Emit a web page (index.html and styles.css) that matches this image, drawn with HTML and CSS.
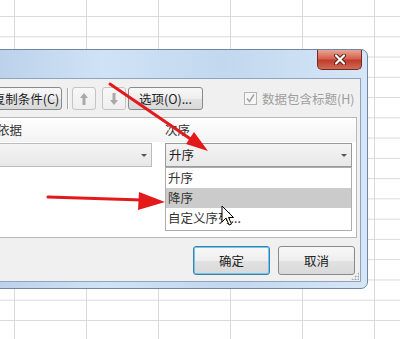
FILE: index.html
```html
<!DOCTYPE html>
<html lang="zh-CN">
<head>
    <meta charset="UTF-8">
    <meta name="viewport" content="width=device-width, initial-scale=1.0">
    <title>排序</title>
    <link rel="stylesheet" href="styles.css">
</head>
<body>

<div class="sheet">

    <div class="dialog">
        <div class="titlebar">
            <span class="title">排序</span>
            <button class="close-btn">
                <svg width="12" height="11" viewBox="0 0 12 11">
                    <path d="M2 1.5 L10 9.5 M10 1.5 L2 9.5" stroke="#5a1e18" stroke-width="4" stroke-linecap="round"/>
                    <path d="M2 1.5 L10 9.5 M10 1.5 L2 9.5" stroke="#ffffff" stroke-width="2.2" stroke-linecap="round"/>
                </svg>
            </button>
        </div>

        <div class="client">
            <div class="toolbar">
                <button class="btn btn-copy">复制条件(C)</button>
                <span class="separator"></span>
                <button class="btn btn-move btn-up" disabled>
                    <svg width="8" height="12" viewBox="0 0 8 12"><path d="M4 0 L8 5 H5.5 V12 H2.5 V5 H0 Z" fill="#a9a9a9"/></svg>
                </button>
                <button class="btn btn-move" disabled>
                    <svg width="8" height="12" viewBox="0 0 8 12"><path d="M4 12 L8 7 H5.5 V0 H2.5 V7 H0 Z" fill="#a9a9a9"/></svg>
                </button>
                <button class="btn btn-options">选项(O)...</button>
                <label class="header-check">
                    <span class="checkbox">
                        <svg width="11" height="11" viewBox="0 0 11 11"><path d="M2 5.5 L4.5 8.5 L9 1.5" stroke="#a0a0a0" stroke-width="1.4" fill="none"/></svg>
                    </span>
                    数据包含标题(H)
                </label>
            </div>

            <div class="sort-grid">
                <div class="grid-head">
                    <span>排序依据</span>
                    <span>次序</span>
                </div>
                <div class="grid-row">
                    <div class="combo combo-basis"><span>数值</span><i class="caret"></i></div>
                    <div class="combo combo-open">
                        <span>升序</span><i class="caret"></i>
                        <ul class="dropdown">
                            <li>升序</li>
                            <li class="hover">降序</li>
                            <li>自定义序列...</li>
                        </ul>
                    </div>
                </div>
            </div>

            <div class="footer">
                <button class="btn btn-ok">确定</button>
                <button class="btn btn-cancel">取消</button>
            </div>
            <span class="grip"></span>
        </div>
    </div>

    <!-- red annotation arrows -->
    <svg class="annotations" width="400" height="339" viewBox="0 0 400 339">
        <line x1="110" y1="84" x2="192" y2="140" stroke="#e3191b" stroke-width="3" stroke-linecap="round"/>
        <polygon points="208,151 186,144 194,132" fill="#e3191b"/>
        <line x1="48" y1="197" x2="142" y2="200" stroke="#e3191b" stroke-width="3" stroke-linecap="round"/>
        <polygon points="165,202 139,192 138,210" fill="#e3191b"/>
    </svg>

    <svg class="cursor" width="14" height="22" viewBox="0 0 14 22">
        <path d="M1 1 L1 17 L5 13 L8 20 L10.5 19 L7.5 12.5 L12.5 12.5 Z" fill="#ffffff" stroke="#000000" stroke-width="1" stroke-linejoin="round"/>
    </svg>

</div>

</body>
</html>
```

FILE: styles.css
```css
body {
    margin: 0;
    padding: 0;
    font-family: "Noto Sans CJK SC", "Liberation Sans", sans-serif;
    font-size: 12.5px;
    color: #222222;
}

/* spreadsheet behind the dialog */
.sheet {
    position: relative;
    width: 400px;
    height: 339px;
    overflow: hidden;
    background-color: #ffffff;
    background-image:
        linear-gradient(to right, #d9d9d9 1px, transparent 1px),
        linear-gradient(to bottom, #d9d9d9 1px, transparent 1px);
    background-size: 72px 100%, 100% 20.27px;
    background-position: 14px 0, 0 16px;
}

/* window frame */
.dialog {
    position: absolute;
    left: -40px;
    top: 49px;
    width: 408px;
    height: 240px;
    box-sizing: border-box;
    border: 1px solid #6d87a5;
    border-radius: 0 7px 7px 0;
    background: linear-gradient(to right, #b4cce7, #d0e2f5 35%, #c2d8ef 65%, #d6e6f6);
    padding: 0 6px 6px;
    display: flex;
    flex-direction: column;
}

.titlebar {
    height: 28px;
    display: flex;
    justify-content: space-between;
    align-items: flex-start;
}

.title {
    padding: 6px 0 0 4px;
    line-height: 16px;
}

.close-btn {
    width: 45px;
    height: 20px;
    margin-right: -1px;
    padding: 0;
    border: 1px solid #6f2b24;
    border-top: none;
    border-radius: 0 0 5px 5px;
    background: linear-gradient(#e9a595, #d3634f 45%, #c13c2c 55%, #d06b54);
    display: flex;
    align-items: center;
    justify-content: center;
}

.client {
    position: relative;
    flex: 1;
    border: 1px solid #8ea4be;
    background-color: #f0f0f0;
    padding: 8px 3px 0 3px;
    display: flex;
    flex-direction: column;
}

/* buttons */
.btn {
    box-sizing: border-box;
    height: 23px;
    margin: 0;
    padding: 0;
    border: 1px solid #8a8a8a;
    border-radius: 3px;
    background: linear-gradient(#f8f8f8, #eeeeee 50%, #e2e2e2 51%, #d9d9d9);
    font-family: inherit;
    font-size: 12.5px;
    line-height: 16px;
    color: #222222;
    display: flex;
    align-items: center;
    justify-content: center;
}

.toolbar {
    height: 23px;
    padding-left: 19px;
    display: flex;
    align-items: center;
}

.btn-copy {
    width: 72px;
}

.separator {
    width: 0;
    height: 21px;
    margin: 0 3px 0 5px;
    border-left: 1px solid #a8a8a8;
    border-right: 1px solid #ffffff;
}

.btn-move {
    width: 24px;
    border-color: #c4c4c4;
    background: linear-gradient(#f7f7f7, #efefef);
}

.btn-up {
    margin-right: 6px;
}

.btn-options {
    width: 75px;
    margin-left: 2px;
}

.header-check {
    margin-left: 41px;
    display: flex;
    align-items: center;
    gap: 5px;
    color: #9e9e9e;
    line-height: 16px;
}

.checkbox {
    width: 13px;
    height: 13px;
    box-sizing: border-box;
    border: 1px solid #b4b4b4;
    background-color: #f6f6f6;
    display: flex;
    align-items: center;
    justify-content: center;
}

/* sort levels list */
.sort-grid {
    margin-top: 7px;
    height: 121px;
    box-sizing: border-box;
    border: 1px solid #b8b8b8;
    background-color: #ffffff;
}

.grid-head, .grid-row {
    display: grid;
    grid-template-columns: 180px 187px;
    column-gap: 13px;
    padding-right: 4px;
}

.grid-head {
    height: 24px;
    align-items: center;
    background: linear-gradient(#ffffff, #f3f3f3);
    color: #333333;
    line-height: 16px;
}

.grid-row {
    padding-top: 1px;
}

.combo {
    position: relative;
    height: 24px;
    box-sizing: border-box;
    border: 1px solid #bcbcbc;
    background: linear-gradient(#f4f4f4, #e8e8e8);
    padding-left: 3px;
    display: flex;
    align-items: center;
    line-height: 16px;
    color: #1e1e1e;
}

.combo-basis {
    padding-left: 0;
    color: #9a9a9a;
}

.combo-open {
    border-color: #9a9a9a;
}

.caret {
    position: absolute;
    right: 4px;
    top: 10px;
    border-left: 3px solid transparent;
    border-right: 3px solid transparent;
    border-top: 3px solid #555555;
}

.dropdown {
    position: absolute;
    top: calc(100% + 1px);
    left: -1px;
    right: -1px;
    margin: 0;
    padding: 0 0 2px;
    list-style: none;
    border: 1px solid #adadad;
    background-color: #ffffff;
    z-index: 2;
}

.dropdown li {
    height: 20px;
    line-height: 20px;
    padding-left: 2px;
    color: #333333;
}

.dropdown li.hover {
    background-color: #cbcbcb;
}

/* dialog buttons */
.footer {
    margin-top: 8px;
    padding-right: 2px;
    display: flex;
    justify-content: flex-end;
    gap: 8px;
}

.btn-ok, .btn-cancel {
    width: 77px;
    height: 29px;
}

.btn-ok {
    border-color: #3c7fb1;
    box-shadow: inset 0 0 0 1px #72c6e8;
}

.grip {
    position: absolute;
    right: 1px;
    bottom: 1px;
    width: 8px;
    height: 8px;
    background-image: radial-gradient(circle, #a8a8a8 0.8px, transparent 1.2px);
    background-size: 3px 3px;
    clip-path: polygon(100% 0, 100% 100%, 0 100%);
}

/* annotations on top */
.annotations {
    position: absolute;
    left: 0;
    top: 0;
    pointer-events: none;
    z-index: 5;
}

.cursor {
    position: absolute;
    left: 221px;
    top: 205px;
    z-index: 6;
}
```
